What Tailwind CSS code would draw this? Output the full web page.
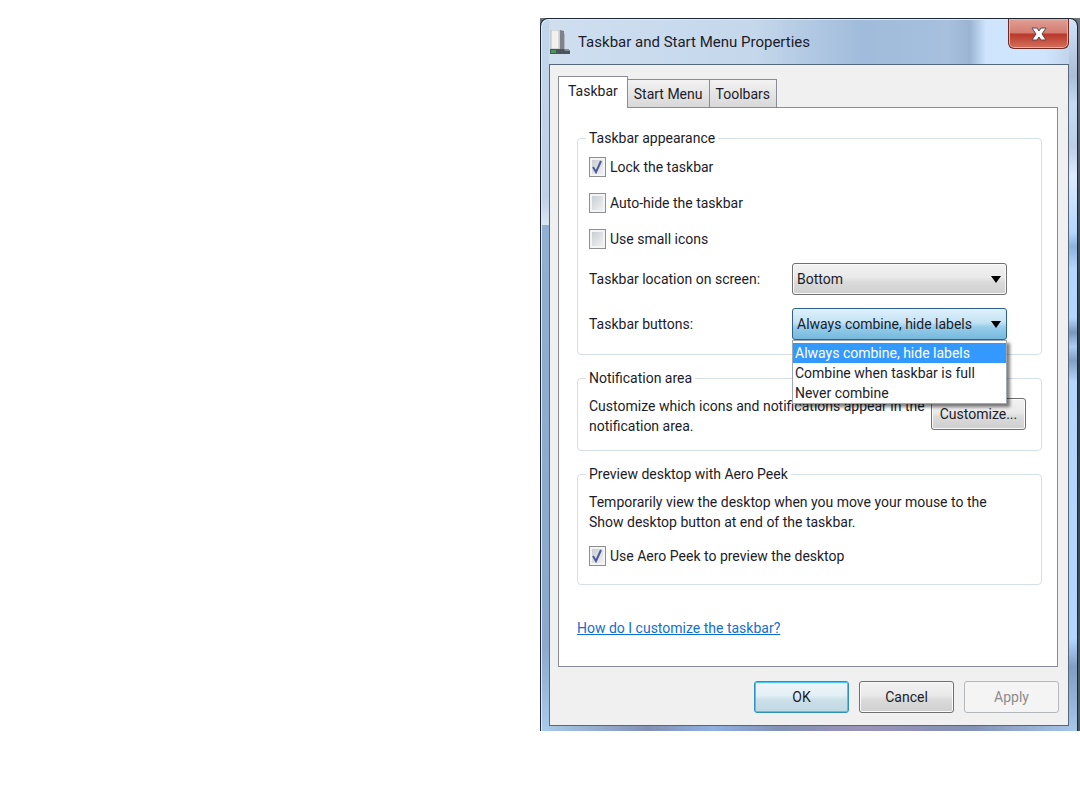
<!DOCTYPE html>
<html lang="en">
<head>
  <meta charset="UTF-8" />
  <meta name="viewport" content="width=device-width, initial-scale=1.0" />
  <title>Taskbar and Start Menu Properties</title>
  <script src="https://cdn.jsdelivr.net/npm/@tailwindcss/browser@4"></script>
</head>
<body class="bg-white min-h-screen pt-[18px] font-['Roboto','Liberation_Sans',sans-serif] text-[14px] leading-5 text-[#1c1c28]">

  <!-- Desktop showing behind the window edge -->
  <div class="ml-auto w-1/2 min-w-[540px] pr-[2px] bg-gradient-to-b from-[#6f7478] via-[#2b3a42] to-[#4f5c60]">

    <!-- Window frame -->
    <main class="rounded-t-lg border border-b-0 border-[#1d2733] px-2 pb-[5px] shadow-[inset_1px_1px_0_#dcebf8] bg-no-repeat bg-[linear-gradient(#c3d6ea_0%,#bdd0e6_25%,#dce8f4_29%,#8fb0d3_29%,#8aa9cc_88%,#a9cbea_100%),linear-gradient(#cfe3fb_0%,#a9bdd6_8%,#c5dcf6_12%,#bccfe6_18%,#dcecff_22%,#b3d6ff_30%,#8eb2dd_32%,#b3d6ff_35%,#b3d6ff_42%,#7898bd_44%,#a9cdf5_46%,#7f9fc4_48%,#b3d6ff_51%,#b3d6ff_87%,#7f9ec4_91%,#a6c6ea_100%),linear-gradient(90deg,#cfdff0_0%,#c4d7eb_40%,#a0bbdb_60%,#a6c0de_76%,#9ab4d2_80%,#cfe4fd_83%,#cfe4fd_94%,#bccfe6_100%),linear-gradient(90deg,#a9cbea_0%,#8291b5_20%,#8fb0e0_32%,#8291b5_45%,#9a93b8_60%,#8291b5_80%,#a6c6ea_100%)] bg-[size:8px_100%,8px_100%,100%_46px,100%_8px] bg-[position:0_0,100%_0,0_0,0_100%]">

      <header class="flex h-[45px] items-start justify-between">
        <div class="flex h-full items-center gap-2">
          <svg class="h-6 w-[21px]" viewBox="0 0 21 24">
            <rect x="2" y="0" width="8" height="19" fill="#f1f1ee" stroke="#b9bec2" />
            <path d="M11 0l4 1v18h-4z" fill="#7d8388" />
            <path d="M15 3l1 1v15h-1z" fill="#b3bac0" />
            <path d="M1 19h18l2 2v3H1z" fill="#4b545b" />
            <path d="M15 19h4l2 2h-5z" fill="#838b90" />
            <rect x="2" y="20" width="5" height="3" fill="#3f9a5a" />
          </svg>
          <h1 class="text-[15px]">Taskbar and Start Menu Properties</h1>
        </div>
        <button aria-label="Close" class="grid h-[30px] w-[61px] place-items-center rounded-b-md border border-t-0 border-[#6b2a24] bg-[linear-gradient(#dfa096_0%,#d57c70_48%,#b8382a_52%,#d4705c_100%)] shadow-[inset_0_0_0_1px_#e6b0a6]">
          <svg class="h-4 w-4" viewBox="0 0 16 16">
            <path d="M1 2h5l2 3 2-3h5l-4 6 4 6h-5l-2-3-2 3H1l4-6z" fill="#fff" stroke="#5a4a50" stroke-width="1" />
          </svg>
        </button>
      </header>

      <div class="border border-[#56687c] bg-[#f0f0f0] px-2 pb-3 pt-[11px]">

        <!-- Tabs -->
        <nav class="flex items-end">
          <button class="relative z-10 -mb-px h-8 border border-b-0 border-[#898c95] bg-white px-[9px] pb-1">Taskbar</button>
          <button class="h-7 border border-b-0 border-l-0 border-[#898c95] bg-gradient-to-b from-[#f2f2f2] to-[#d8d8d8] px-[6px]">Start Menu</button>
          <button class="h-7 border border-b-0 border-l-0 border-[#898c95] bg-gradient-to-b from-[#f2f2f2] to-[#d8d8d8] px-[6px]">Toolbars</button>
        </nav>

        <!-- Taskbar page -->
        <section class="mr-[2px] border border-[#898c95] bg-white pl-[18px] pr-[15px] pb-7 pt-5">
          <form class="flex flex-col gap-[13px]">

            <fieldset class="rounded border border-[#d5dfe5] pb-[14px] pl-[11px] pr-[15px] pt-[9px]">
              <legend class="-ml-[3px] px-[3px]">Taskbar appearance</legend>
              <div class="flex flex-col gap-4">
                <label class="flex items-center gap-1">
                  <span class="relative h-5 w-[17px]">
                    <input type="checkbox" checked class="block h-5 w-[17px] appearance-none border border-[#8e8f8f] bg-gradient-to-br from-[#c4c9d0] to-[#f6f6f6] shadow-[inset_0_0_0_2px_#f4f4f4]" />
                    <svg class="pointer-events-none absolute inset-0" viewBox="0 0 17 20"><path d="M4 10l3 5 5-11" fill="none" stroke="#4a5c9b" stroke-width="2" /></svg>
                  </span>
                  Lock the taskbar
                </label>
                <label class="flex items-center gap-1">
                  <input type="checkbox" class="block h-5 w-[17px] appearance-none border border-[#8e8f8f] bg-gradient-to-br from-[#c4c9d0] to-[#f6f6f6] shadow-[inset_0_0_0_2px_#f4f4f4]" />
                  Auto-hide the taskbar
                </label>
                <label class="flex items-center gap-1">
                  <input type="checkbox" class="block h-5 w-[17px] appearance-none border border-[#8e8f8f] bg-gradient-to-br from-[#c4c9d0] to-[#f6f6f6] shadow-[inset_0_0_0_2px_#f4f4f4]" />
                  Use small icons
                </label>
              </div>

              <div class="mt-[14px] flex items-center">
                <label for="location" class="w-[203px]">Taskbar location on screen:</label>
                <div class="relative w-[215px]">
                  <select id="location" class="block h-8 w-full appearance-none rounded-[3px] border border-[#707070] bg-[linear-gradient(#f2f2f2_0%,#e9e9e9_45%,#dadada_60%,#cfcfcf_100%)] px-1 shadow-[inset_0_0_0_1px_#fafafa]">
                    <option>Bottom</option>
                    <option>Left</option>
                    <option>Right</option>
                    <option>Top</option>
                  </select>
                  <svg class="pointer-events-none absolute right-[6px] top-[13px] h-[7px] w-[10px]" viewBox="0 0 10 7"><path d="M0 0h10L5 7z" fill="#000" /></svg>
                </div>
              </div>

              <div class="mt-[13px] flex items-center">
                <label for="buttons" class="w-[203px]">Taskbar buttons:</label>
                <div class="relative w-[215px]">
                  <select id="buttons" class="block h-8 w-full appearance-none rounded-[3px] border border-[#2c628b] bg-[linear-gradient(#dff0fa_0%,#c3e3f5_45%,#98cdea_60%,#74b8dc_100%)] px-1">
                    <option>Always combine, hide labels</option>
                    <option>Combine when taskbar is full</option>
                    <option>Never combine</option>
                  </select>
                  <svg class="pointer-events-none absolute right-[6px] top-[13px] h-[7px] w-[10px]" viewBox="0 0 10 7"><path d="M0 0h10L5 7z" fill="#000" /></svg>
                  <!-- Open list -->
                  <ul class="absolute left-0 right-0 top-full z-20 border border-[#a0a8b0] bg-white pt-[2px] shadow-[3px_3px_3px_rgba(0,0,0,0.5)]">
                    <li class="bg-[#3399ff] px-[2px] text-white">Always combine, hide labels</li>
                    <li class="px-[2px]">Combine when taskbar is full</li>
                    <li class="px-[2px]">Never combine</li>
                  </ul>
                </div>
              </div>
            </fieldset>

            <fieldset class="rounded border border-[#d5dfe5] pb-[14px] pl-[11px] pr-[15px] pt-2">
              <legend class="-ml-[3px] px-[3px]">Notification area</legend>
              <div class="flex items-start">
                <p class="flex-1">Customize which icons and notifications appear in the notification area.</p>
                <button type="button" class="mt-[2px] h-8 w-[95px] rounded-[3px] border border-[#707070] bg-[linear-gradient(#f2f2f2_0%,#e9e9e9_45%,#dadada_60%,#cfcfcf_100%)] shadow-[inset_0_0_0_1px_#fafafa]">Customize...</button>
              </div>
            </fieldset>

            <fieldset class="rounded border border-[#d5dfe5] pb-[18px] pl-[11px] pr-[15px] pt-2">
              <legend class="-ml-[3px] px-[3px]">Preview desktop with Aero Peek</legend>
              <p class="max-w-[420px]">Temporarily view the desktop when you move your mouse to the Show desktop button at end of the taskbar.</p>
              <label class="mt-[14px] flex items-center gap-1">
                <span class="relative h-5 w-[17px]">
                  <input type="checkbox" checked class="block h-5 w-[17px] appearance-none border border-[#8e8f8f] bg-gradient-to-br from-[#c4c9d0] to-[#f6f6f6] shadow-[inset_0_0_0_2px_#f4f4f4]" />
                  <svg class="pointer-events-none absolute inset-0" viewBox="0 0 17 20"><path d="M4 10l3 5 5-11" fill="none" stroke="#4a5c9b" stroke-width="2" /></svg>
                </span>
                Use Aero Peek to preview the desktop
              </label>
            </fieldset>
          </form>

          <a href="#" class="mt-[33px] inline-block text-[#0f6fd0] underline">How do I customize the taskbar?</a>
        </section>

        <footer class="mt-[14px] flex justify-end gap-[10px] pr-px">
          <button class="h-8 w-[95px] rounded-[3px] border border-[#2f8fbd] bg-[linear-gradient(#eef6fa_0%,#e2eff5_45%,#cbdfe8_60%,#c0d8e3_100%)] shadow-[inset_0_0_0_1px_#46c8f0]">OK</button>
          <button class="h-8 w-[95px] rounded-[3px] border border-[#707070] bg-[linear-gradient(#f2f2f2_0%,#e9e9e9_45%,#dadada_60%,#cfcfcf_100%)] shadow-[inset_0_0_0_1px_#fafafa]">Cancel</button>
          <button disabled class="h-8 w-[95px] rounded-[3px] border border-[#b4b8ba] bg-[#f4f4f4] text-[#8c8c8c]">Apply</button>
        </footer>
      </div>
    </main>
  </div>

</body>
</html>
